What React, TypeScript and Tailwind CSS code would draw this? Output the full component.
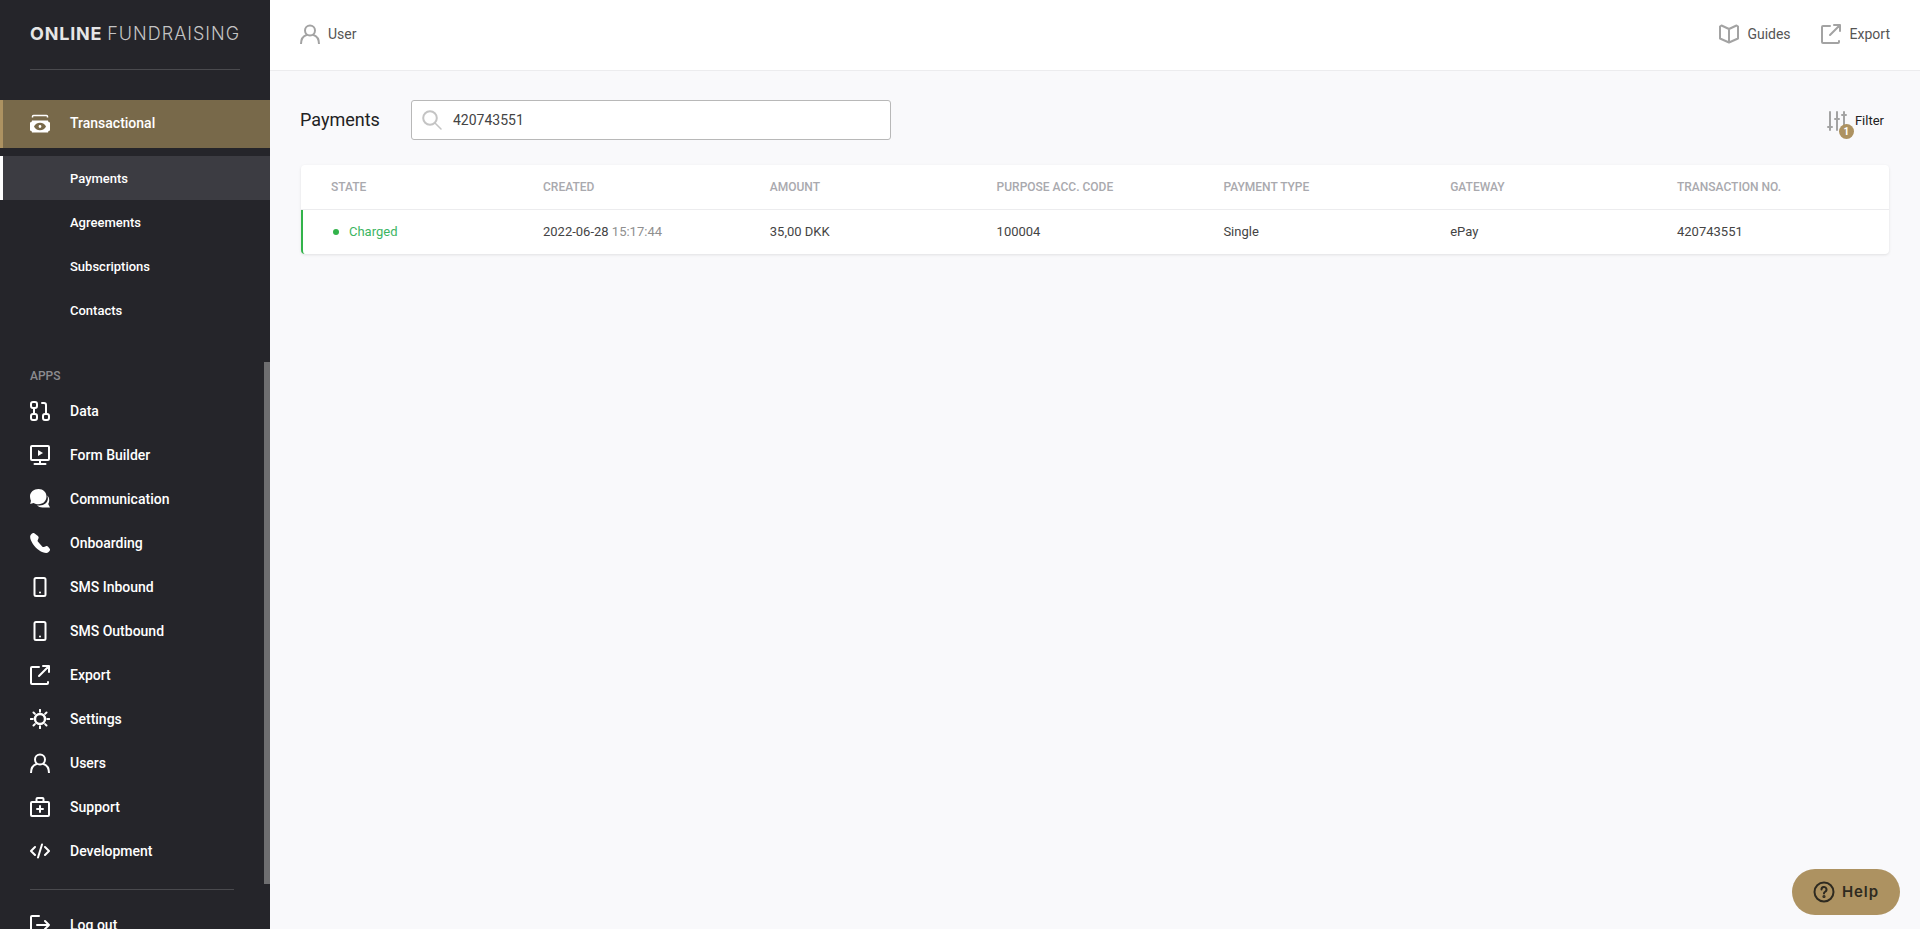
import { ReactNode } from "react";

const strokeProps = {
  fill: "none",
  stroke: "currentColor",
  strokeWidth: 2,
  strokeLinecap: "round" as const,
  strokeLinejoin: "round" as const,
};

const Icon = ({ children, className = "h-5 w-5" }: { children: ReactNode; className?: string }) => (
  <svg viewBox="0 0 20 20" className={className} {...strokeProps}>
    {children}
  </svg>
);

const CashIcon = () => (
  <svg viewBox="0 0 20 20" className="h-5 w-5">
    <path d="M2.500 3.500V2.500a1 1 0 0 1 1-1h13a1 1 0 0 1 1 1v1" fill="none" stroke="#fff" strokeWidth="1.500" />
    <path
      fillRule="evenodd"
      fill="#fff"
      d="M2 6.500h16a2 2 0 0 0 2 2v8a2 2 0 0 0-2 2H2a2 2 0 0 0-2-2v-8a2 2 0 0 0 2-2ZM10 8.700c-2.800 0-5 1.700-6 3.800 1 2.100 3.200 3.800 6 3.800s5-1.700 6-3.800c-1-2.100-3.200-3.800-6-3.800Zm0 2.400a1.400 1.400 0 1 1 0 2.800 1.400 1.400 0 0 1 0-2.800Z"
    />
  </svg>
);

const DataIcon = () => (
  <Icon>
    <rect x="1" y="1" width="6" height="6" rx="2" />
    <rect x="1" y="13" width="6" height="6" rx="2" />
    <rect x="13" y="13" width="6" height="6" rx="2" />
    <path d="M4 7v6M12 2h2a2 2 0 0 1 2 2v9" />
  </Icon>
);

const MonitorIcon = () => (
  <svg viewBox="0 0 20 20" className="h-5 w-5 text-white">
    <path d="M2 1h16a1 1 0 0 1 1 1v12a1 1 0 0 1-1 1H2a1 1 0 0 1-1-1V2a1 1 0 0 1 1-1ZM10 15v4M4.500 19h11" {...strokeProps} />
    <path d="M8 5l5 3-5 3z" fill="#fff" />
  </svg>
);

const ChatIcon = () => (
  <svg viewBox="0 0 20 20" className="h-5 w-5" fill="#fff">
    <path d="M8.500 0C3.800 0 0 3.200 0 7.300c0 2.700 1 4.500 1 4.500L.2 15l3.300-1c1.500.9 3.200 1.300 5 1.300 4.700 0 8-3.400 8-7.700S13.200 0 8.500 0Z" />
    <path d="M17.300 6.500c.4 1 .6 1.800.6 2.800 0 4.300-3.600 7.200-8.300 7.200-1 0-1.800-.1-2.600-.3 1.400 1.600 3.400 2.200 5.500 2.200h7.500l-1.800-3.500c.8-1.200 1-2.500 1-3.800 0-2-.7-3.500-1.900-4.600Z" />
  </svg>
);

const PhoneIcon = () => (
  <svg viewBox="0 0 20 20" className="h-5 w-5" fill="#fff">
    <path d="M4.300.3C3.600-.2 2.600 0 2 .5L.8 1.700C-.2 2.700 0 5 .9 7.300c1 2.500 2.700 5 4.800 7.100 2.100 2 4.500 3.800 7.100 4.800 2.300.9 4.600 1 5.500.1l1.200-1.200c.6-.6.7-1.600.2-2.300l-1.600-2c-.5-.7-1.400-.9-2.200-.6l-2 .8c-.5.2-1.100.1-1.500-.3L8 8.800c-.4-.4-.5-1-.3-1.500l.8-2c.3-.8.1-1.700-.6-2.200L4.300.3Z" />
  </svg>
);

const MobileIcon = () => (
  <svg viewBox="0 0 20 20" className="h-5 w-5 text-white">
    <rect x="4.500" y="1" width="11" height="18" rx="1.500" {...strokeProps} />
    <circle cx="10" cy="15.500" r="1" fill="#fff" />
  </svg>
);

const ExportIcon = ({ className }: { className?: string }) => (
  <Icon className={className}>
    <path d="M9 2H2a1 1 0 0 0-1 1v15a1 1 0 0 0 1 1h15a1 1 0 0 0 1-1v-1M9 11 18 2M13 1h6v6" />
  </Icon>
);

const GearIcon = () => (
  <Icon>
    <circle cx="10" cy="10" r="5" strokeWidth="2.400" />
    <path d="M10 .8v2M10 17.200v2M.8 10h2M17.200 10h2M3.500 3.500l1.400 1.400M15.100 15.100l1.400 1.400M3.500 16.500l1.400-1.400M15.100 4.900l1.400-1.400" />
  </Icon>
);

const UserIcon = ({ className }: { className?: string }) => (
  <Icon className={className}>
    <circle cx="10" cy="6.500" r="5" />
    <path d="M1 20c0-4.500 2.500-8 5.500-9M19 20c0-4.500-2.500-8-5.500-9" />
  </Icon>
);

const SupportIcon = () => (
  <Icon>
    <rect x="1" y="5" width="18" height="14" rx="1" />
    <path d="M6.500 5V2a1 1 0 0 1 1-1h5a1 1 0 0 1 1 1v3M10 9v6M7 12h6" />
  </Icon>
);

const CodeIcon = () => (
  <Icon>
    <path d="M5 6l-4 4 4 4M15 6l4 4-4 4M12 3.500 8 16.500" />
  </Icon>
);

const LogoutIcon = () => (
  <Icon>
    <path d="M9 1H2a1 1 0 0 0-1 1v16a1 1 0 0 0 1 1h7M7 10h12M15 6l4 4-4 4" />
  </Icon>
);

const BookIcon = () => (
  <Icon className="h-5 w-5 text-[#a3a3a3]">
    <path d="M10 5 2.500 1.500 1 2.500v12l9 4 9-4v-12l-1.500-1L10 5ZM10 5v13.500" />
  </Icon>
);

const subItems = ["Payments", "Agreements", "Subscriptions", "Contacts"];

const apps: { label: string; icon: ReactNode }[] = [
  { label: "Data", icon: <DataIcon /> },
  { label: "Form Builder", icon: <MonitorIcon /> },
  { label: "Communication", icon: <ChatIcon /> },
  { label: "Onboarding", icon: <PhoneIcon /> },
  { label: "SMS Inbound", icon: <MobileIcon /> },
  { label: "SMS Outbound", icon: <MobileIcon /> },
  { label: "Export", icon: <ExportIcon /> },
  { label: "Settings", icon: <GearIcon /> },
  { label: "Users", icon: <UserIcon /> },
  { label: "Support", icon: <SupportIcon /> },
  { label: "Development", icon: <CodeIcon /> },
];

const columns = ["State", "Created", "Amount", "Purpose acc. code", "Payment type", "Gateway", "Transaction no."];

const Sidebar = () => (
  <aside className="relative h-full w-[270px] shrink-0 overflow-hidden bg-[#25252a] text-white">
    <div className="mx-[30px] flex h-[70px] items-center border-b border-[#4a4a4e] pb-[1px] text-[18px] leading-none whitespace-nowrap text-[#e6e6e6] font-['Inter',sans-serif]">
      <span className="font-bold tracking-[0.8px]">ONLINE</span>
      <span className="ml-[5px] font-light tracking-[1px] text-[#c4c4c4]">FUNDRAISING</span>
    </div>

    <div className="mt-[30px] flex h-[48px] items-center gap-5 border-l-[3px] border-[#ad9261] bg-[#78694a] pb-[1px] pl-[27px] text-[14px] font-medium">
      <CashIcon />
      <span>Transactional</span>
    </div>

    <ul className="mt-2">
      {subItems.map((item, i) => (
        <li
          key={item}
          className={`flex h-[44px] items-center border-l-[3px] pl-[67px] pt-[1px] text-[13px] font-medium ${
            i === 0 ? "border-white bg-[#3c3c42]" : "border-transparent"
          }`}
        >
          {item}
        </li>
      ))}
    </ul>

    <div className="mt-[32px] flex h-[23px] items-center pl-[30px] text-[12px] font-medium text-[#8c8c90]">APPS</div>

    <ul className="mt-[2px]">
      {apps.map((app) => (
        <li key={app.label} className="flex h-[44px] items-center gap-5 pl-[30px] text-[14px] font-medium">
          {app.icon}
          <span>{app.label}</span>
        </li>
      ))}
    </ul>

    <div className="ml-[30px] mt-[16px] w-[204px] border-t border-[#4a4a4e]" />

    <div className="mt-[13px] flex h-[44px] items-center gap-5 pl-[30px] text-[14px] font-medium">
      <LogoutIcon />
      <span>Log out</span>
    </div>

    {/* scrollbar thumb */}
    <div className="absolute right-0 top-[362px] h-[522px] w-[6px] bg-[#6e6e70]" />
  </aside>
);

const PaymentsTable = () => (
  <div className="mx-[1px] mt-[25px] rounded-[4px] bg-white shadow-[0_1px_3px_rgba(0,0,0,0.1)]">
    <div className="grid h-[45px] grid-cols-[212px_repeat(5,226.8px)_1fr] items-center border-b border-[#ececee] pl-[30px] text-[12px] font-medium uppercase text-[#a9a9ae]">
      {columns.map((c) => (
        <div key={c}>{c}</div>
      ))}
    </div>
    <div className="grid h-[44px] grid-cols-[212px_repeat(5,226.8px)_1fr] items-center rounded-bl-[4px] border-l-2 border-[#32b34a] pl-[28px] text-[13px] text-[#444]">
      <div className="flex items-center pl-[2px] text-[#3cb563]">
        <span className="h-[6px] w-[6px] rounded-full bg-[#32b34a]" />
        <span className="ml-[10px]">Charged</span>
      </div>
      <div>
        2022-06-28 <span className="text-[#8f8f8f]">15:17:44</span>
      </div>
      <div>35,00 DKK</div>
      <div>100004</div>
      <div>Single</div>
      <div>ePay</div>
      <div>420743551</div>
    </div>
  </div>
);

export default function App() {
  return (
    <div className="flex h-screen w-full overflow-hidden bg-[#f9f9fb] font-['Roboto',sans-serif]">
      <Sidebar />
      <main className="relative min-w-0 flex-1">
        <header className="flex h-[71px] items-center justify-between border-b border-[#ececee] bg-white px-[30px] pb-[2px] text-[14px] text-[#555]">
          <div className="flex items-center gap-2">
            <UserIcon className="h-5 w-5 text-[#a3a3a3]" />
            <span>User</span>
          </div>
          <div className="flex items-center">
            <div className="flex items-center gap-2">
              <BookIcon />
              <span>Guides</span>
            </div>
            <div className="ml-[30px] flex items-center gap-[9px]">
              <ExportIcon className="h-5 w-5 text-[#a3a3a3]" />
              <span>Export</span>
            </div>
          </div>
        </header>

        <section className="px-[30px] pt-[29px]">
          <div className="flex h-[40px] items-center">
            <h1 className="w-[111px] pb-[2px] text-[18px] font-normal text-[#222]">Payments</h1>
            <div className="flex h-[40px] w-[480px] items-center rounded-[3px] border border-[#b8b8b8] bg-white pl-[10px] text-[14px] text-[#444]">
              <svg viewBox="0 0 20 20" className="h-5 w-5" fill="none" stroke="#c4c4c4" strokeLinecap="round">
                <circle cx="8" cy="8" r="6.800" strokeWidth="2" />
                <path d="M13.500 13.500 19 19" strokeWidth="1.500" />
              </svg>
              <span className="ml-[11px]">420743551</span>
            </div>
            <div className="relative ml-auto mr-[6px] flex items-center gap-2 pt-[2px] text-[13px] text-[#222]">
              <svg viewBox="0 0 20 20" className="h-5 w-5 text-[#a3a3a3]" {...strokeProps}>
                <path d="M3 1v18M10 1v18M17 1v18M1 16h4M8 8h4M15 4h4" />
              </svg>
              <span>Filter</span>
              <span className="absolute left-[12px] top-[15px] flex h-[15px] w-[15px] items-center justify-center rounded-full bg-[#ad9261] text-[10px] font-bold leading-none text-white">
                1
              </span>
            </div>
          </div>

          <PaymentsTable />
        </section>

        <button className="absolute bottom-[14px] right-[20px] flex h-[46px] w-[108px] items-center justify-center gap-[7px] rounded-[23px] bg-[#ad9261] text-[15px] font-semibold tracking-[0.9px] text-[#2e2a20] font-['Inter',sans-serif]">
          <svg viewBox="0 0 22 22" className="h-[22px] w-[22px]" fill="none" stroke="currentColor" strokeWidth="2" strokeLinecap="round">
            <circle cx="11" cy="11" r="9.500" />
            <path d="M8.500 8.500a2.500 2.500 0 1 1 3.500 2.300c-.7.3-1 .8-1 1.700" />
            <circle cx="11" cy="15.500" r=".6" fill="currentColor" />
          </svg>
          Help
        </button>
      </main>
    </div>
  );
}
